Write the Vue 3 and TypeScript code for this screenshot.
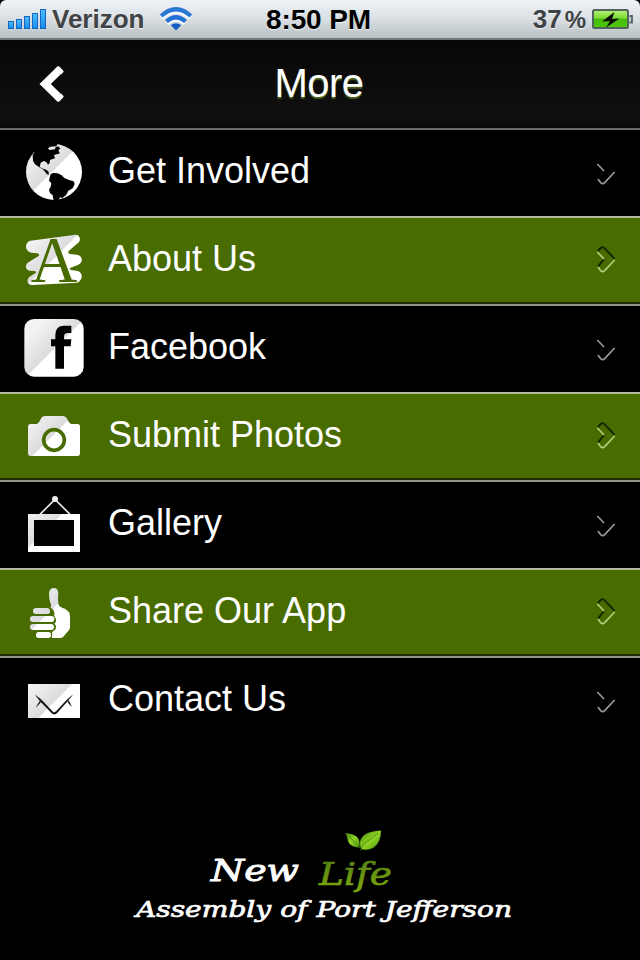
<script setup lang="ts">
interface MenuItem {
  label: string
  icon: string
  viewTop: number
  shine: [number, number]
}

const items: MenuItem[] = [
  { label: 'Get Involved', icon: 'globe', viewTop: 6, shine: [156, 132] },
  { label: 'About Us', icon: 'about', viewTop: 9, shine: [162, 130] },
  { label: 'Facebook', icon: 'facebook', viewTop: 9, shine: [162, 138] },
  { label: 'Submit Photos', icon: 'camera', viewTop: 12, shine: [158, 137] },
  { label: 'Gallery', icon: 'frame', viewTop: 6, shine: [150, 138] },
  { label: 'Share Our App', icon: 'thumb', viewTop: 6, shine: [148, 132] },
  { label: 'Contact Us', icon: 'mail', viewTop: 270, shine: [162, 403] },
]
</script>

<template>
  <div class="screen">
    <div class="status">
      <div class="carrier">
        <svg class="signal" width="40" height="24" viewBox="0 0 40 24">
          <defs>
            <linearGradient id="bar" x1="0" y1="0" x2="0" y2="1">
              <stop offset="0" stop-color="#4dc0f8" />
              <stop offset="1" stop-color="#168bea" />
            </linearGradient>
          </defs>
          <g fill="url(#bar)" stroke="#1765c4" stroke-width="1">
            <rect x=".5" y="14.5" width="5" height="7" />
            <rect x="8.500" y="12.500" width="5" height="9" />
            <rect x="16.500" y="9.500" width="5" height="12" />
            <rect x="24.500" y="6.500" width="5" height="15" />
            <rect x="32.500" y="2.500" width="5" height="19" />
          </g>
        </svg>
        <span class="carrier-name">Verizon</span>
        <svg class="wifi" width="34" height="28" viewBox="0 0 34 28">
          <g fill="none" stroke="#fff" transform="translate(0 1)">
            <path d="M2.500 10.500Q17-2.500 31.500 10.500" stroke-width="5" />
            <path d="M8 16Q17 8 26 16" stroke-width="5" />
          </g>
          <path d="M2.200 10Q17-3.500 31.800 10" fill="none" stroke="#2878d4" stroke-width="4.300" />
          <path d="M7.500 15.500Q17 7 26.500 15.500" fill="none" stroke="#2370d6" stroke-width="4.200" />
          <path d="M11.800 19.300Q17 15 22.200 19.300L17 24.500Z" fill="#165dc8" />
        </svg>
      </div>
      <div class="clock">8:50 PM</div>
      <div class="power">
        <span class="level">37</span><span class="percent">%</span>
        <svg class="battery" width="44" height="24" viewBox="0 0 44 24">
          <defs>
            <linearGradient id="charge" x1="0" y1="0" x2="0" y2="1">
              <stop offset="0" stop-color="#b8f07c" />
              <stop offset=".45" stop-color="#7ddb35" />
              <stop offset=".5" stop-color="#47bd08" />
              <stop offset="1" stop-color="#4dc90c" />
            </linearGradient>
          </defs>
          <rect x="2" y="2" width="35" height="18" rx="1.500" fill="url(#charge)" stroke="#53635e" stroke-width="2" />
          <path d="M38.500 8h2.500v6.500H38.500" fill="#b9c4cb" stroke="#56636b" stroke-width="1.800" />
          <path d="M23.500 4L11 13.500L19 13L15 19.500L28.500 10.500L21 11Z" fill="#080b04" />
        </svg>
      </div>
    </div>

    <header class="header">
      <svg class="back" width="30" height="44" viewBox="0 0 30 44">
        <path d="M25 7.500L10.200 22L25 36.500" fill="none" stroke="#fff" stroke-width="8" />
        <path d="M22.500 4.500Q23.300 3.700 24.200 4.500L28.200 8.600Q29 9.500 28.200 10.300L26 12.500L20 7ZM22.500 39.500Q23.300 40.300 24.200 39.500L28.200 35.400Q29 34.500 28.200 33.700L26 31.500L20 37Z" fill="#fff" />
      </svg>
      <h1 class="title">More</h1>
    </header>

    <nav class="menu">
      <div v-for="(item, i) in items" :key="item.label" class="row" :class="{ green: i % 2 === 1, last: i === items.length - 1 }">
        <svg class="icon" width="108" height="86" :viewBox="`0 ${item.viewTop} 324 258`">
          <defs>
            <linearGradient
              :id="`shine-${item.icon}`"
              gradientUnits="userSpaceOnUse"
              :x1="item.shine[0] - 60"
              :y1="item.shine[1] - 60"
              :x2="item.shine[0] + 60"
              :y2="item.shine[1] + 60"
            >
              <stop offset="0" stop-color="#f3f3f3" />
              <stop offset=".49" stop-color="#dcdcde" />
              <stop offset=".51" stop-color="#fff" />
            </linearGradient>
          </defs>

          <g v-if="item.icon === 'globe'">
            <circle cx="162" cy="132" r="84" fill="url(#shine-globe)" />
            <path d="M92 52L104 72L98 82L99 98L105 109L118 118L130 125L141 139L147 140L145 130L138 125L125 121L119 116L122 104L131 99L139 102L144 110L149 105L150 96L160 92L165 91L162 81L173 78L180 76L175 68L181 61L174 55L167 57L165 64L148 66L144 61L151 56L169 55L172 48L160 42Z" fill="#000" />
            <path d="M151 140L158 135L173 136L185 142L193 150L205 155L221 160L224 168L218 181L205 188L198 202L187 210L180 208L174 220L161 220L158 201L150 196L147 185L152 176L154 166L147 158Z" fill="#000" />
          </g>

          <g v-else-if="item.icon === 'about'">
            <path d="M91 77L222 60C238 56 246 74 234 84L206 108Q202 114 210 117L230 119C249 121 250 143 235 149L212 158Q206 162 213 165L234 168C250 174 249 195 232 203L96 210C79 210 79 191 91 184L107 174Q110 169 103 168L88 167C75 164 74 146 88 140L117 122Q119 116 111 115L94 113C75 110 72 82 91 77Z" fill="url(#shine-about)" />
            <text x="162" y="201" class="icon-letter" text-anchor="middle">A</text>
          </g>

          <g v-else-if="item.icon === 'facebook'">
            <rect x="73" y="48" width="178" height="173" rx="29" fill="url(#shine-facebook)" />
            <path d="M166 197V130H153V109H166V96Q166 68 193 68H214V90H203Q192 90 192 101V109H214L212 130H192V197Z" fill="#000" />
          </g>

          <g v-else-if="item.icon === 'camera'">
            <path d="M92 102H111Q118 99 122 88Q126 78 136 78H187Q197 78 202 88Q206 99 213 102H232Q240 102 240 110V190Q240 198 232 198H92Q84 198 84 190V110Q84 102 92 102Z" fill="url(#shine-camera)" />
            <circle cx="162" cy="150" r="31" fill="none" stroke="#486c00" stroke-width="11" />
          </g>

          <g v-else-if="item.icon === 'frame'">
            <path d="M120 103L165 58L210 103" fill="none" stroke="#e8e8e8" stroke-width="5" />
            <circle cx="165" cy="57" r="9" fill="#eee" />
            <path d="M84 102H240V216H84ZM102 120V198H222V120Z" fill="url(#shine-frame)" fill-rule="evenodd" />
          </g>

          <g v-else-if="item.icon === 'thumb'">
            <path d="M147 76Q148 60 163 60Q175 62 175 78Q173 94 175 108Q179 119 195 122L207 132Q210 137 210 145V179Q209 187 200 194L190 206Q186 210 179 210H157Q153 207 157 201L156 193Q160 188 167 184L168 174L163 166Q170 163 168 154L162 142Q166 137 160 126L151 118Q156 113 151 105Q147 94 147 76Z" fill="url(#shine-thumb)" />
            <g fill="url(#shine-thumb)">
              <rect x="99" y="120" width="51" height="18" rx="9" />
              <rect x="90" y="144" width="73" height="18" rx="9" />
              <rect x="90" y="168" width="72" height="18" rx="9" />
              <rect x="108" y="192" width="45" height="18" rx="8" />
            </g>
          </g>

          <g v-else>
            <rect x="84" y="348" width="156" height="102" fill="url(#shine-mail)" />
            <path d="M107 382L124 395L158 431Q163 436 169 430L201 395L217 382L203 399L170 436Q163 442 155 435L120 399ZM122 396L114 408L109 417L122 403ZM203 397L205 405L214 415L208 401Z" fill="#080808" stroke="#080808" stroke-width="1" />
          </g>
        </svg>

        <span class="label">{{ item.label }}</span>

        <svg class="arrow" width="70" height="86" viewBox="0 -30 210 258">
          <path d="M84 69L92 60Q98 55 104 61L133 92M102 94L84 115" class="arrow-shade" />
          <path d="M82 72L102 93M84 117L92 128Q98 134 104 128L134 96" class="arrow-light" />
        </svg>
      </div>
    </nav>

    <footer class="brand">
      <svg width="640" height="214" viewBox="0 746 640 214">
        <defs>
          <linearGradient id="leaf" x1="0" y1="0" x2="1" y2="1">
            <stop offset="0" stop-color="#3d850b" />
            <stop offset=".5" stop-color="#91d324" />
            <stop offset="1" stop-color="#4c930c" />
          </linearGradient>
          <linearGradient id="life" x1="0" y1="0" x2="0" y2="1">
            <stop offset="0" stop-color="#517d12" />
            <stop offset="1" stop-color="#7da90e" />
          </linearGradient>
        </defs>
        <path d="M345.500 833C355 834 361 837 359.500 847.500C352 847 348 844 347.500 839Q347 836 345.500 833Z" fill="url(#leaf)" />
        <path d="M381 830.500Q381 843 373 848Q367 851 361 849Q357 837 369 832.500Q374 831 381 830.500Z" fill="url(#leaf)" />
        <path d="M349 836L360 848M378 833L363 845L360.500 851" fill="none" stroke="#347508" stroke-width=".7" />
        <text x="211" y="881" class="script new" textLength="88" lengthAdjust="spacingAndGlyphs">New</text>
        <text x="319" y="885" class="script life" textLength="73" lengthAdjust="spacingAndGlyphs">Life</text>
        <text x="136" y="916.500" class="script place" textLength="376" lengthAdjust="spacingAndGlyphs">Assembly of Port Jefferson</text>
      </svg>
    </footer>
  </div>
</template>

<style>
body {
  background: #000;
}
</style>

<style scoped>
.screen {
  width: 640px;
  height: 960px;
  display: flex;
  flex-direction: column;
  overflow: hidden;
  background: #000;
  color: #fff;
  font-family: "Liberation Sans", Arial, sans-serif;
}
.status,
.header,
.menu,
.brand {
  flex: none;
}
.status {
  box-sizing: border-box;
  height: 40px;
  display: grid;
  grid-template-columns: 1fr auto 1fr;
  align-items: center;
  padding: 1px 5px 0 8px;
  border-bottom: 2px solid #717b7e;
  border-radius: 6px 6px 0 0;
  background: linear-gradient(#edf3f6, #d9dfe2 50%, #b9c1c4);
  color: #3f4346;
  font-weight: bold;
  text-shadow: 0 1px 0 rgba(255, 255, 255, 0.7);
}
.carrier,
.power {
  display: flex;
  align-items: center;
}
.signal {
  margin-top: -2px;
}
.carrier-name {
  margin-left: 4px;
  font-size: 26px;
  line-height: 37px;
}
.wifi {
  margin-left: 15px;
}
.clock {
  margin-left: -6px;
  color: #000;
  font-size: 28px;
  line-height: 37px;
  letter-spacing: -0.1px;
}
.power {
  justify-content: flex-end;
  font-size: 26px;
}
.percent {
  margin-left: 3px;
  font-size: 24px;
}
.battery {
  margin-left: 5px;
}
.header {
  box-sizing: border-box;
  height: 90px;
  display: grid;
  grid-template-columns: 112px 1fr 112px;
  align-items: center;
  border-bottom: 2px solid #6c6c6c;
  background: linear-gradient(#070707, #101010 90%, #090909);
}
.back {
  margin-left: 35px;
}
.title {
  margin: 0 2px 2px 0;
  text-align: center;
  font-size: 40px;
  line-height: 46px;
  font-weight: normal;
  letter-spacing: -0.5px;
  text-shadow: 0 2px 1px #4b601b;
}
.row {
  box-sizing: border-box;
  height: 88px;
  display: flex;
  border-bottom: 2px solid #b1b99b;
}
.row.green {
  border-bottom-color: #92978a;
  background: #486c00;
  box-shadow: inset 0 -2px 0 #1c2b03;
}
.row.last {
  border-bottom: 0;
}
.icon,
.arrow {
  flex: none;
}
.icon-letter {
  fill: #486c00;
  font-family: "Liberation Serif", serif;
  font-size: 194px;
}
.label {
  flex: 1;
  font-size: 36px;
  line-height: 82px;
  white-space: nowrap;
}
.arrow-shade,
.arrow-light {
  fill: none;
  stroke-width: 5;
}
.arrow-shade {
  stroke: #020402;
}
.arrow-light {
  stroke: #999;
}
.green .arrow-shade {
  stroke: #182500;
  stroke-width: 6;
}
.green .arrow-light {
  stroke: #b6cf7a;
}
.brand {
  display: flex;
}
.script {
  fill: #fff;
  stroke: #fff;
  stroke-width: 0.7;
  font-family: "DejaVu Serif", serif;
  font-style: italic;
}
.new {
  font-size: 29px;
  stroke-width: 0.9;
}
.life {
  fill: url(#life);
  stroke: url(#life);
  font-size: 31px;
}
.place {
  font-size: 22px;
}
</style>
